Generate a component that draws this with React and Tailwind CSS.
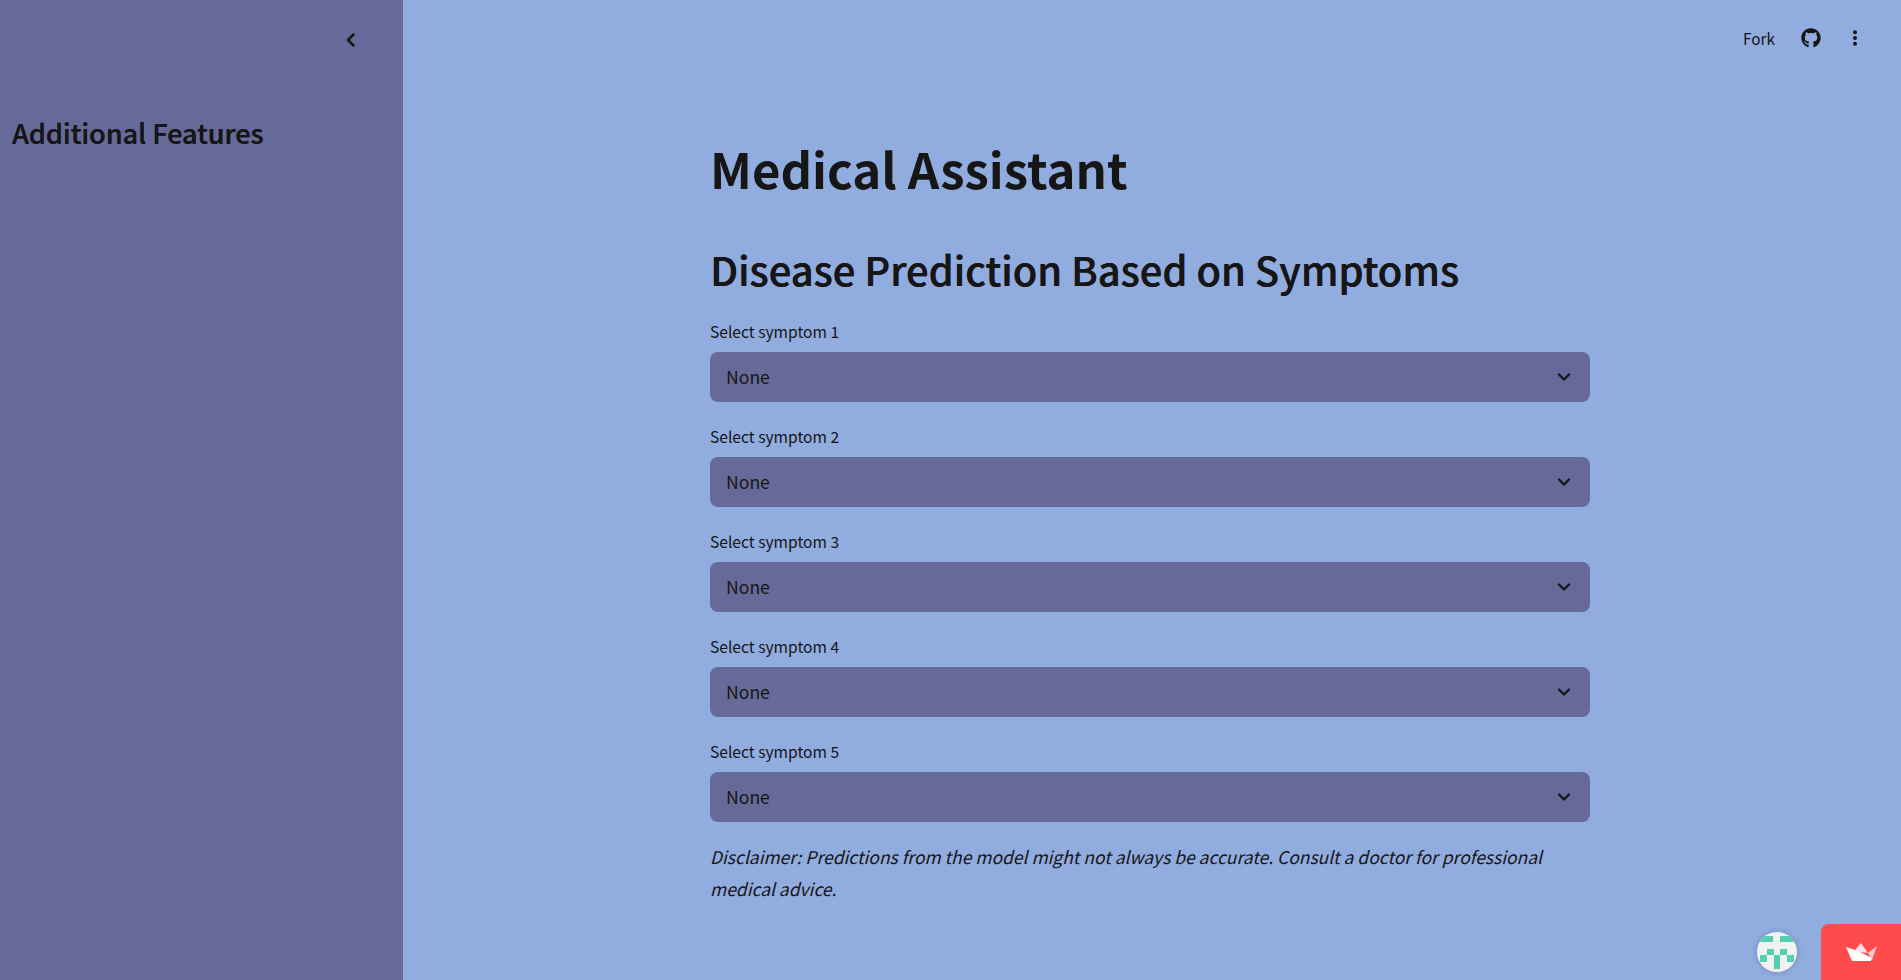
import React from "react";
import { FaGithub } from "react-icons/fa";

const font = "font-['Noto_Sans_CJK_SC','Noto_Sans',sans-serif]";

function Chevron() {
  return (
    <svg width="16" height="16" viewBox="0 0 16 16" fill="none" stroke="#161616" strokeWidth="2.4" strokeLinecap="round" strokeLinejoin="round">
      <path d="M3 5.5 8 10.5 13 5.5" />
    </svg>
  );
}

function SymptomSelect({ n }) {
  return (
    <div className="flex flex-col">
      <label className="h-[32px] text-[15.6px] leading-[22px] text-[#161616]">Select symptom {n}</label>
      <div className="h-[50px] flex items-center justify-between rounded-[8px] bg-[#666a99] pl-[16px] pr-[18px]">
        <span className="text-[17.6px] text-[#161616]">None</span>
        <Chevron />
      </div>
    </div>
  );
}

export default function App() {
  return (
    <div className={`${font} relative flex h-[980px] w-full overflow-hidden bg-[#91acdf] text-[#161616]`}>
      <aside className="flex w-[403px] shrink-0 flex-col bg-[#666a99]">
        <div className="flex h-[80px] justify-end pr-[40px] pt-[28px]">
          <svg width="24" height="24" viewBox="0 0 24 24" fill="none" stroke="#161616" strokeWidth="2.6" strokeLinecap="round" strokeLinejoin="round">
            <path d="M14.5 6.5 9 12l5.5 5.5" />
          </svg>
        </div>
        <h2 className="mt-[35px] pl-[12px] text-[27px] leading-[36px] font-medium [text-shadow:0.3px_0_0_#161616]">Additional Features</h2>
      </aside>
      <main className="flex min-w-0 flex-1 flex-col">
        <header className="flex h-[75px] items-center justify-end pr-[36px] gap-[26px]">
          <span className="text-[15.4px] leading-[24px]">Fork</span>
          <div className="flex items-center gap-[24px]">
            <FaGithub className="h-[20px] w-[20px] text-[#161616]" />
            <svg width="20" height="20" viewBox="0 0 20 20" fill="#161616">
              <circle cx="10" cy="4.3" r="2" />
              <circle cx="10" cy="10" r="2" />
              <circle cx="10" cy="15.7" r="2" />
            </svg>
          </div>
        </header>
        <div className="ml-[307px] w-[880px]">
          <h1 className="mt-[57px] text-[49.1px] leading-[72px] font-bold">Medical Assistant</h1>
          <h2 className="mt-[37px] text-[39.9px] leading-[56px] font-medium [text-shadow:0.4px_0_0_#161616]">Disease Prediction Based on Symptoms</h2>
          <div className="mt-[23px] flex flex-col gap-[23px]">
            {[1, 2, 3, 4, 5].map((n) => (
              <SymptomSelect key={n} n={n} />
            ))}
          </div>
          <p className="mt-[19px] text-[17.47px] leading-[32px] italic">
            Disclaimer: Predictions from the model might not always be accurate. Consult a doctor for professional medical advice.
          </p>
        </div>
      </main>
      <div className="absolute bottom-0 right-0 flex h-[56px] w-[80px] items-center justify-center rounded-tl-[8px] bg-[#ff4b4b]">
        <svg width="31" height="18" viewBox="0 0 31 18">
          <path d="M15 0 8 8.5 22 10Z" fill="#fcdde3" />
          <path d="M31 3 22 10 26 17Z" fill="#fec5d0" />
          <path d="M0 4 6 18H25L26 15 12 8Z" fill="#fff" />
        </svg>
      </div>
      <div className="absolute bottom-[8px] right-[104px] h-[40px] w-[40px] overflow-hidden rounded-full bg-[#f1f1f1] shadow-[0_0_6px_rgba(0,0,0,0.2)]">
        <svg width="40" height="40" viewBox="0 0 40 40" fill="#55d0ae">
          <rect x="2" y="4" width="14" height="6" />
          <rect x="23" y="4" width="14" height="6" />
          <rect x="10" y="17" width="7" height="6" />
          <rect x="23" y="17" width="7" height="6" />
          <rect x="3" y="23" width="7" height="7" />
          <rect x="17" y="23" width="6" height="14" />
          <rect x="30" y="23" width="7" height="7" />
        </svg>
      </div>
    </div>
  );
}
